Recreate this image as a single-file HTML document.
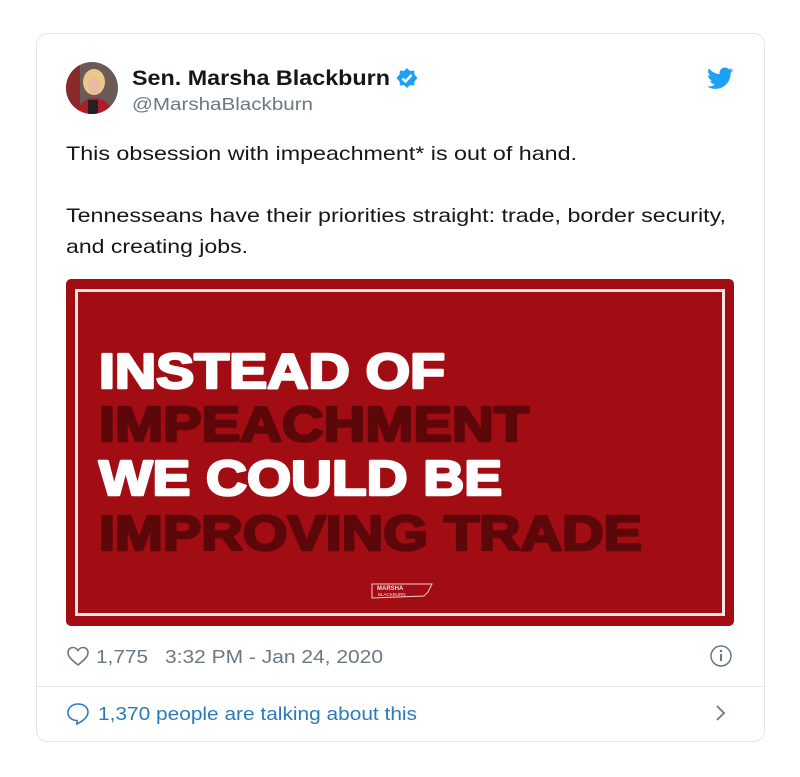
<!DOCTYPE html>
<html><head><meta charset="utf-8"><style>
html,body{margin:0;padding:0;background:#fff;}
body{width:800px;height:772px;overflow:hidden;}
</style></head><body>
<svg width="800" height="772" xmlns="http://www.w3.org/2000/svg" font-family="Liberation Sans, Arial, sans-serif">
<rect x="36.5" y="33.5" width="728" height="708" rx="11" fill="#fff" stroke="#e1e6ea"/>
<defs><clipPath id="av"><circle cx="92" cy="88" r="26"/></clipPath></defs>
<g clip-path="url(#av)">
<rect x="60" y="56" width="64" height="64" fill="#6b5a55"/>
<rect x="60" y="56" width="20" height="64" fill="#8a2a2a"/>
<ellipse cx="94" cy="82" rx="11" ry="13" fill="#e8c98a"/>
<ellipse cx="94" cy="86" rx="6" ry="8" fill="#e9b9a0"/>
<path d="M72 120 Q80 98 94 98 Q110 98 116 120Z" fill="#b01d2a"/>
<rect x="88" y="100" width="10" height="20" fill="#222"/>
</g>
<text x="132" y="85" font-size="21" font-weight="bold" fill="#14171a" textLength="258" lengthAdjust="spacingAndGlyphs">Sen. Marsha Blackburn</text>
<g transform="translate(407,78)"><path d="M0-10 L3-7 7-7.5 7.5-3.5 10.5 0 7.5 3.5 7 7.5 3 7 0 10 -3 7 -7 7.5 -7.5 3.5 -10.5 0 -7.5-3.5 -7-7.5 -3-7Z" fill="#1da1f2"/><path d="M-4.5 0.5 L-1.5 3.5 4.5-3" stroke="#fff" stroke-width="2.4" fill="none"/></g>
<text x="132" y="110" font-size="17.5" fill="#697882" textLength="181" lengthAdjust="spacingAndGlyphs">@MarshaBlackburn</text>
<path transform="translate(707,65) scale(1.1)" fill="#1da1f2" d="M23.6 4.6c-.9.4-1.8.6-2.8.8 1-.6 1.8-1.6 2.2-2.7-1 .6-2 1-3.1 1.2-.9-1-2.2-1.6-3.6-1.6-2.7 0-4.9 2.2-4.9 4.9 0 .4 0 .8.1 1.1C7.7 8.1 4.1 6.1 1.7 3.1c-.4.7-.7 1.6-.7 2.5 0 1.7.9 3.2 2.2 4.1-.8 0-1.6-.2-2.2-.6v.1c0 2.4 1.7 4.4 3.9 4.8-.4.1-.8.2-1.3.2-.3 0-.6 0-.9-.1.6 2 2.4 3.4 4.6 3.4-1.7 1.3-3.8 2.1-6.1 2.1-.4 0-.8 0-1.2-.1 2.2 1.4 4.8 2.2 7.5 2.2 9.1 0 14-7.5 14-14v-.6c1-.7 1.8-1.6 2.5-2.5z"/>
<text x="66" y="160" font-size="19.5" fill="#14171a" textLength="511" lengthAdjust="spacingAndGlyphs">This obsession with impeachment* is out of hand.</text>
<text x="66" y="222" font-size="19.5" fill="#14171a" textLength="660" lengthAdjust="spacingAndGlyphs">Tennesseans have their priorities straight: trade, border security,</text>
<text x="66" y="253" font-size="19.5" fill="#14171a" textLength="182" lengthAdjust="spacingAndGlyphs">and creating jobs.</text>
<rect x="66" y="279" width="668" height="347" rx="5" fill="#a10d12"/>
<rect x="76.5" y="290.5" width="647" height="324" fill="none" stroke="#f5e6e6" stroke-width="3"/>
<g font-weight="bold" stroke-width="2.6" stroke-linejoin="round">
<text x="99" y="388" font-size="49" fill="#fff" stroke="#fff" textLength="346" lengthAdjust="spacingAndGlyphs">INSTEAD OF</text>
<text x="99" y="441" font-size="49" fill="#5c0709" stroke="#5c0709" textLength="430" lengthAdjust="spacingAndGlyphs">IMPEACHMENT</text>
<text x="99" y="495" font-size="49" fill="#fff" stroke="#fff" textLength="403" lengthAdjust="spacingAndGlyphs">WE COULD BE</text>
<text x="99" y="550" font-size="49" fill="#5c0709" stroke="#5c0709" textLength="543" lengthAdjust="spacingAndGlyphs">IMPROVING TRADE</text>
</g>
<path d="M372 584 L432 584 L428 592 L424 596 L372 598Z" fill="none" stroke="#f0d0d0" stroke-width="1"/>
<text x="377" y="590" font-size="6" font-weight="bold" fill="#f5dede">MARSHA</text>
<text x="378" y="596" font-size="4.5" fill="#f5dede">BLACKBURN</text>
<path transform="translate(67,646)" d="M11 19 C5 14 1 11 1 6.5 1 3.5 3.3 1.5 6 1.5 8.2 1.5 10 3 11 4.5 12 3 13.8 1.5 16 1.5 18.7 1.5 21 3.5 21 6.5 21 11 17 14 11 19Z" fill="none" stroke="#697882" stroke-width="1.6"/>
<text x="96" y="663" font-size="18.5" fill="#697882" textLength="52" lengthAdjust="spacingAndGlyphs">1,775</text>
<text x="165" y="663" font-size="18.5" fill="#697882" textLength="218" lengthAdjust="spacingAndGlyphs">3:32 PM - Jan 24, 2020</text>
<circle cx="721" cy="656" r="10" fill="none" stroke="#697882" stroke-width="1.5"/>
<circle cx="721" cy="651" r="1.3" fill="#697882"/>
<rect x="720" y="654" width="2" height="7" fill="#697882"/>
<line x1="37" y1="686.5" x2="764" y2="686.5" stroke="#e1e6ea"/>
<path d="M78 704 C72 704 68 708 68 712.5 C68 717 72 720.5 77 720.5 L77 724 C83 721 88 717 88 712 C88 707.5 84 704 78 704Z" fill="none" stroke="#2b7bb9" stroke-width="1.6"/>
<text x="98" y="720" font-size="18.5" fill="#2b7bb9" textLength="319" lengthAdjust="spacingAndGlyphs">1,370 people are talking about this</text>
<path d="M717 706 L724 713 717 720" fill="none" stroke="#697882" stroke-width="1.8"/>
</svg>
</body></html>
